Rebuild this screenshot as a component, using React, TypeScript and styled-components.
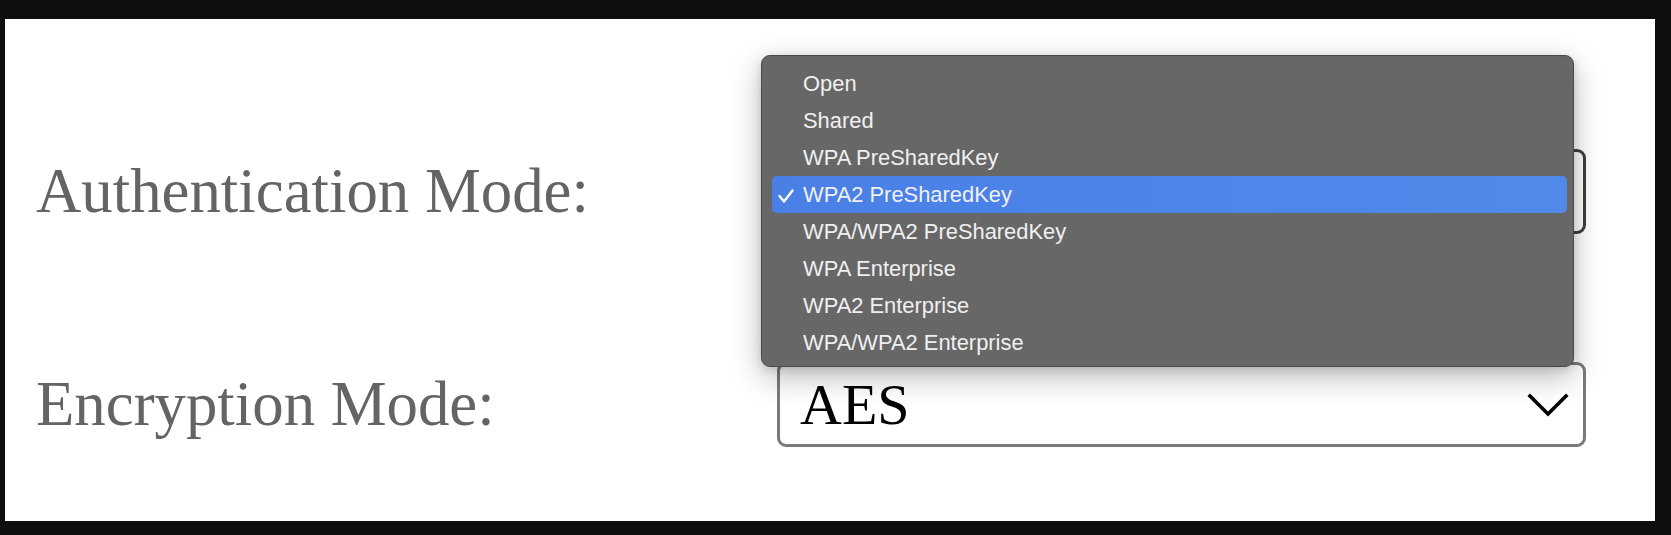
import React from "react";
import styled, { createGlobalStyle } from "styled-components";

const GlobalStyle = createGlobalStyle`
  html, body {
    margin: 0;
    padding: 0;
    background: #0e0e0e;
  }
  #root {
    width: 1671px;
    height: 535px;
  }
`;

const Frame = styled.div`
  box-sizing: border-box;
  width: 1671px;
  height: 535px;
  padding: 19px 16px 14px 5px;
  background: #0e0e0e;
`;

const Panel = styled.div`
  box-sizing: border-box;
  width: 100%;
  height: 100%;
  background: #ffffff;
  padding: 130px 69px 0 31px;
  display: grid;
  grid-template-columns: 1fr 809px;
  grid-template-rows: 85px 85px;
  row-gap: 128px;
  align-items: center;
`;

const Label = styled.div`
  font-family: "Liberation Serif", "Times New Roman", serif;
  font-size: 62.8px;
  color: #646464;
  white-space: nowrap;
`;

const SelectWrap = styled.div`
  position: relative;
  height: 100%;
`;

const SelectBox = styled.div<{ $open?: boolean }>`
  box-sizing: border-box;
  height: 100%;
  border: 3px solid ${(p) => (p.$open ? "#3f3f3f" : "#7a7a7a")};
  border-radius: 9px;
  background: #fff;
  display: flex;
  align-items: center;
  justify-content: space-between;
  padding: 0 14px 0 20px;
`;

const SelectValue = styled.span`
  font-family: "Liberation Serif", "Times New Roman", serif;
  font-size: 58px;
  color: #000;
  white-space: nowrap;
`;

const Chevron = () => (
  <svg width="42" height="26" viewBox="0 0 42 26" fill="none">
    <path
      d="M3 4 L21 22 L39 4"
      stroke="#000"
      strokeWidth="3.6"
      strokeLinecap="square"
      strokeLinejoin="miter"
    />
  </svg>
);

const Menu = styled.div`
  position: absolute;
  left: -16px;
  top: -94px;
  width: 813px;
  box-sizing: border-box;
  padding: 9px 0 5px;
  background: #676767;
  border: 1px solid #4a4a4a;
  border-radius: 9px;
  box-shadow: 0 10px 30px rgba(0, 0, 0, 0.28), 0 2px 8px rgba(0, 0, 0, 0.12);
  z-index: 10;
`;

const Item = styled.div<{ $selected?: boolean }>`
  height: 37px;
  margin: 0 6px 0 10px;
  padding-left: 6px;
  display: flex;
  align-items: center;
  border-radius: 5px;
  background: ${(p) => (p.$selected ? "linear-gradient(90deg, #4a80e6, #5089ea)" : "transparent")};
  font-family: "Liberation Sans", Arial, sans-serif;
  font-size: 21.9px;
  color: #f0f0f0;
  white-space: nowrap;
`;

const CheckSlot = styled.span`
  width: 25px;
  flex: none;
  display: flex;
  align-items: center;
  padding-top: 2px;
`;

const Check = () => (
  <svg width="16" height="14" viewBox="0 0 16 14" fill="none">
    <path
      d="M1.5 7 L6 12.5 L14.5 1.5"
      stroke="#ffffff"
      strokeWidth="2.4"
      strokeLinecap="round"
      strokeLinejoin="round"
    />
  </svg>
);

const options = [
  "Open",
  "Shared",
  "WPA PreSharedKey",
  "WPA2 PreSharedKey",
  "WPA/WPA2 PreSharedKey",
  "WPA Enterprise",
  "WPA2 Enterprise",
  "WPA/WPA2 Enterprise",
];

const selected = "WPA2 PreSharedKey";

export default function App() {
  return (
    <>
      <GlobalStyle />
      <Frame>
        <Panel>
          <Label>Authentication Mode:</Label>
          <SelectWrap>
            <SelectBox $open />
            <Menu>
              {options.map((o) => (
                <Item key={o} $selected={o === selected}>
                  <CheckSlot>{o === selected ? <Check /> : null}</CheckSlot>
                  {o}
                </Item>
              ))}
            </Menu>
          </SelectWrap>
          <Label>Encryption Mode:</Label>
          <SelectWrap>
            <SelectBox>
              <SelectValue>AES</SelectValue>
              <Chevron />
            </SelectBox>
          </SelectWrap>
        </Panel>
      </Frame>
    </>
  );
}
